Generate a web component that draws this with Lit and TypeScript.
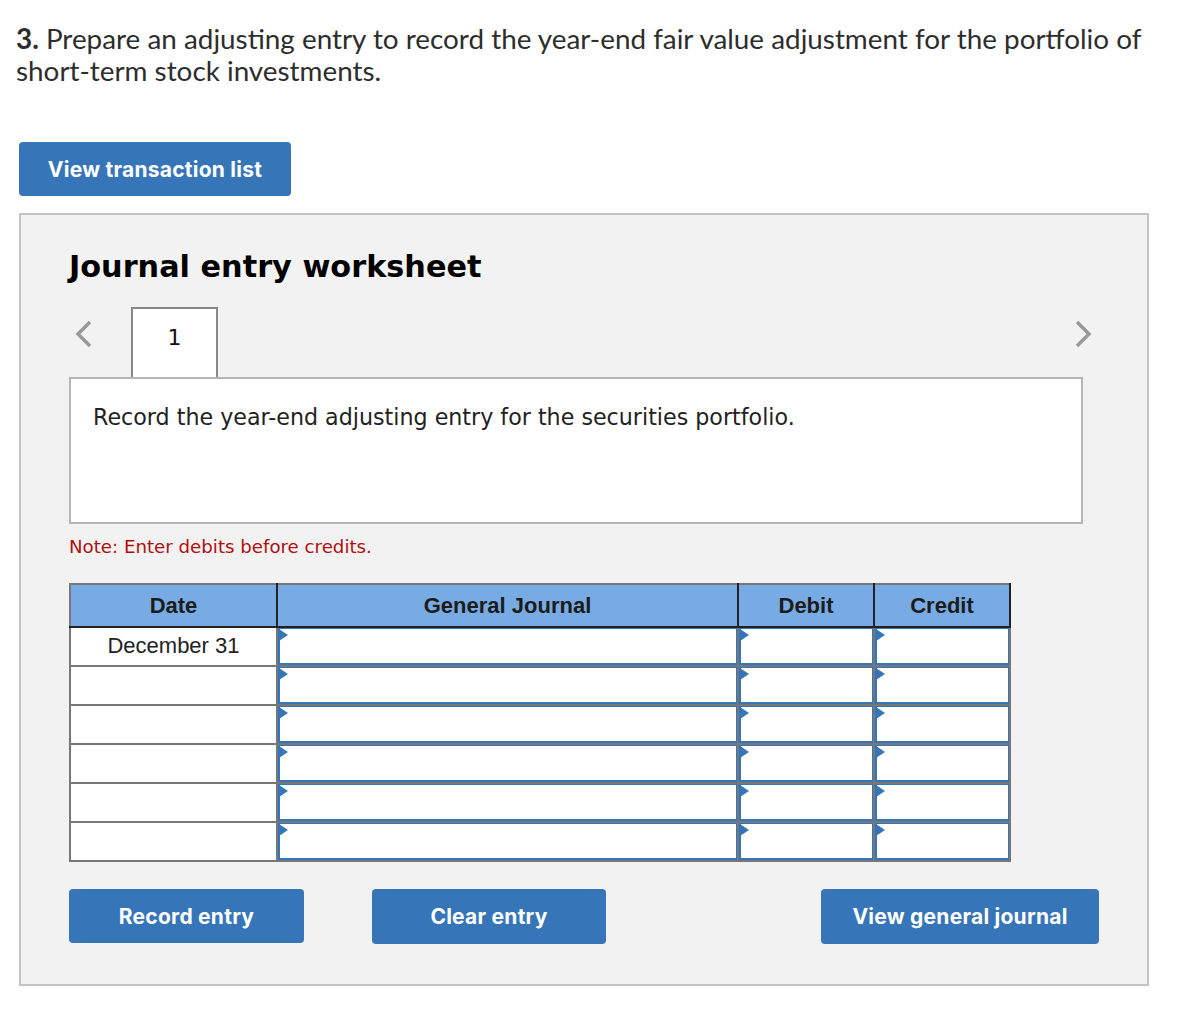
import { html, css, LitElement } from 'lit'
import { customElement } from 'lit/decorators.js'

@customElement('app-root')
export class AppRoot extends LitElement {
  static styles = css`
    :host {
      display: block;
      width: 1189px;
      height: 1011px;
      background: #fff;
      font-family: 'Lato', 'Liberation Sans', sans-serif;
      box-sizing: border-box;
      padding: 23px 19px 0 19px;
      overflow: hidden;
    }
    .question {
      margin: 0 0 0 -3px;
      font-size: 27.85px;
      line-height: 32px;
      color: #2d2d2d;
      width: 1150px;
    }
    .question b { font-weight: 700; }
    button {
      display: block;
      border: none;
      background: #3775b9;
      color: #fff;
      font-family: 'Inter', sans-serif;
      font-weight: 700;
      font-size: 21px;
      letter-spacing: 0.25px;
      border-radius: 4px;
      padding: 0;
    }
    .view-list { width: 272px; height: 54px; margin-top: 55px; }
    .panel {
      width: 1130px;
      height: 773px;
      margin-top: 17px;
      box-sizing: border-box;
      border: 2px solid #c4c4c4;
      background: #f2f2f2;
      padding: 32px 48px 0 48px;
    }
    h2 {
      margin: 0;
      font-family: 'DejaVu Sans', sans-serif;
      font-size: 30.3px;
      font-weight: 700;
      line-height: 40px;
      color: #000;
    }
    .tabs {
      display: flex;
      align-items: flex-start;
      margin-top: 20px;
      height: 70px;
      width: 1030px;
    }
    .tabs svg { display: block; margin-top: 12px; flex: none; }
    .tab {
      width: 87px;
      height: 70px;
      box-sizing: border-box;
      border: 2px solid #888;
      border-bottom: none;
      background: #fff;
      margin-left: 34px;
      margin-right: auto;
      text-align: center;
      font-family: 'DejaVu Sans', sans-serif;
      font-size: 22px;
      line-height: 58px;
      color: #111;
    }
    .prompt {
      width: 1014px;
      height: 147px;
      box-sizing: border-box;
      border: 2px solid #b5b5b5;
      background: #fff;
      padding: 22px;
      font-family: 'DejaVu Sans', sans-serif;
      font-size: 22.2px;
      line-height: 32px;
      color: #222;
    }
    .note {
      margin-top: 11px;
      font-family: 'DejaVu Sans', sans-serif;
      font-size: 18.2px;
      line-height: 24px;
      color: #b30e0e;
    }
    table {
      margin-top: 24px;
      border-collapse: collapse;
      table-layout: fixed;
      width: 942px;
      background: #fff;
      font-family: 'Liberation Sans', sans-serif;
    }
    th {
      background: #78abe3;
      height: 41px;
      padding: 0;
      border: 2px solid #222;
      border-top-color: #777;
      font-size: 22px;
      font-weight: 700;
      color: #1c1c1c;
    }
    th:first-child { border-left-color: #777; }
    td {
      height: 37px;
      padding: 0;
      border: 2px solid #777;
      text-align: center;
      font-size: 22px;
      color: #222;
    }
    .date { height: 37px; line-height: 35px; }
    .field {
      position: relative;
      box-sizing: border-box;
      height: 37px;
      background: #fff;
      border: solid #3775b9;
      border-width: 1px 1px 2px 2px;
    }
    .field::before {
      content: '';
      position: absolute;
      left: -1px;
      top: 0;
      border-left: 9px solid #3775b9;
      border-top: 6.5px solid transparent;
      border-bottom: 6.5px solid transparent;
    }
    .actions {
      display: flex;
      align-items: flex-start;
      margin-top: 27px;
    }
    .actions button { height: 55px; }
    .actions .record { width: 235px; height: 54px; }
    .clear { width: 234px; margin-left: 68px; }
    .general { width: 278px; margin-left: 215px; }
  `

  rows = ['December 31', '', '', '', '', '']

  render() {
    return html`
      <p class="question"><b>3.</b> Prepare an adjusting entry to record the year-end fair value adjustment for the portfolio of<br>short-term stock investments.</p>
      <button class="view-list">View transaction list</button>
      <section class="panel">
        <h2>Journal entry worksheet</h2>
        <div class="tabs">
          <svg width="28" height="30" viewBox="0 0 28 30" fill="none" stroke="#999" stroke-width="3.5"><path d="M21 3 L9 15 L21 27"/></svg>
          <div class="tab">1</div>
          <svg width="28" height="30" viewBox="0 0 28 30" fill="none" stroke="#999" stroke-width="3.5"><path d="M6 3 L18 15 L6 27"/></svg>
        </div>
        <div class="prompt">Record the year-end adjusting entry for the securities portfolio.</div>
        <div class="note">Note: Enter debits before credits.</div>
        <table>
          <colgroup><col style="width:207px"><col style="width:461px"><col style="width:136px"><col style="width:136px"></colgroup>
          <tr><th>Date</th><th>General Journal</th><th>Debit</th><th>Credit</th></tr>
          ${this.rows.map(r => html`
            <tr>
              <td><div class="date">${r}</div></td>
              <td><div class="field"></div></td>
              <td><div class="field"></div></td>
              <td><div class="field"></div></td>
            </tr>
          `)}
        </table>
        <div class="actions">
          <button class="record">Record entry</button>
          <button class="clear">Clear entry</button>
          <button class="general">View general journal</button>
        </div>
      </section>
    `
  }
}
